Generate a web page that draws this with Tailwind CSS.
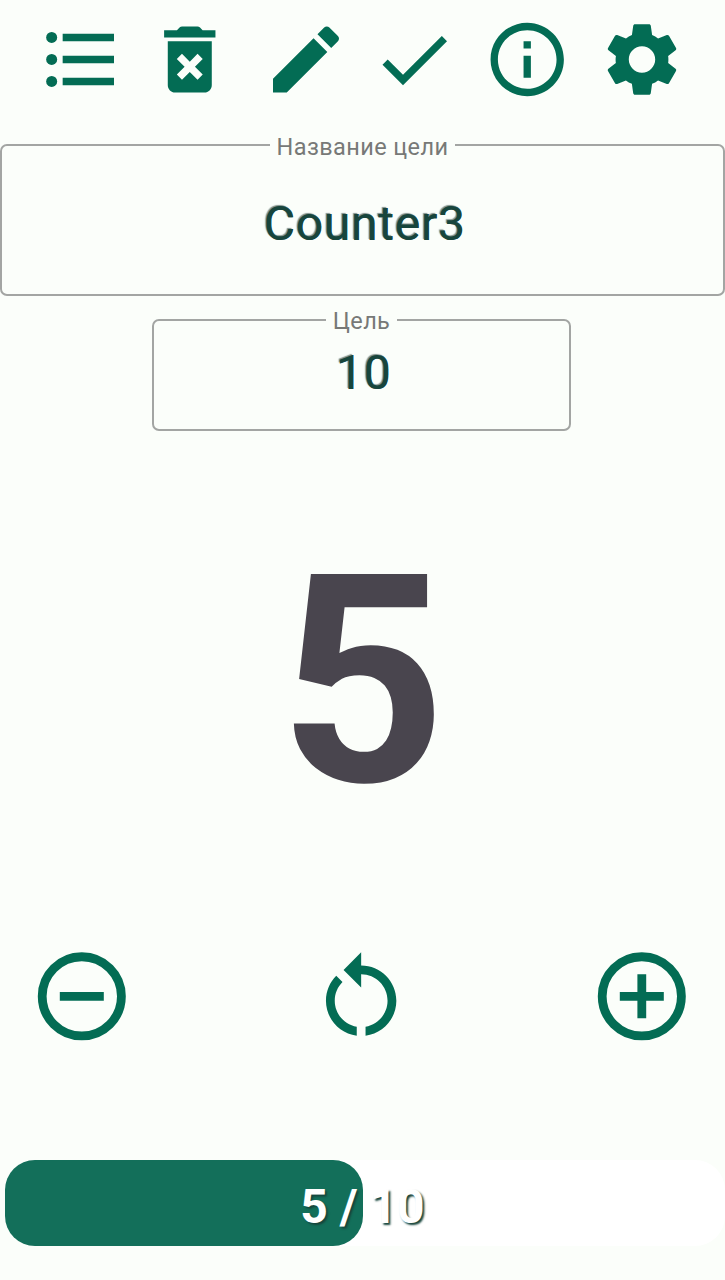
<!DOCTYPE html>
<html lang="ru">
<head>
<meta charset="utf-8">
<meta name="viewport" content="width=device-width, initial-scale=1">
<title>Counter3</title>
<script src="https://cdn.jsdelivr.net/npm/@tailwindcss/browser@4"></script>
</head>
<body class="bg-[#fbfefa] font-[Roboto,sans-serif]">
<div class="flex h-[1280px] w-[725px] flex-col overflow-hidden bg-[#fbfefa] text-[#036c54]">
  <header class="flex h-[144px] pt-[15px] pl-[37px]">
    <svg class="size-[88px] shrink-0" viewBox="0 -0.13 24 24" fill="currentColor"><circle cx="4" cy="6" r="1.5"/><circle cx="4" cy="12" r="1.5"/><circle cx="4" cy="18" r="1.5"/><path d="M7 5h14v2H7zM7 11h14v2H7zM7 17h14v2H7z"/></svg>
    <svg class="ml-[21px] size-[88px] shrink-0" viewBox="0.06 -0.13 24 24" fill="currentColor"><path fill-rule="evenodd" d="M6 19c0 1.100.9 2 2 2h8c1.100 0 2-.9 2-2V7H6v12zM8.460 11.880l1.410-1.410L12 12.590l2.120-2.120 1.410 1.410L13.410 14l2.120 2.120-1.410 1.410L12 15.410l-2.120 2.120-1.410-1.410L10.590 14zM15.500 4l-.71-.71c-.18-.18-.44-.29-.7-.29H9.910c-.26 0-.52.11-.7.29L8.500 4H5v2h14V4z"/></svg>
    <svg class="ml-[28px] size-[88px] shrink-0" viewBox="0 -0.13 24 24" fill="currentColor"><path d="M3 17.250V21h3.750L17.810 9.940l-3.750-3.750L3 17.250zM20.710 7.040c.39-.39.39-1.020 0-1.410l-2.340-2.340c-.39-.39-1.020-.39-1.410 0l-1.830 1.830 3.750 3.750 1.830-1.830z"/></svg>
    <svg class="ml-[20px] size-[88px] shrink-0" viewBox="0 -0.13 24 24" fill="currentColor"><path d="M9 16.170L4.830 12l-1.420 1.410L9 19 21 7l-1.410-1.410z"/></svg>
    <svg class="ml-[25.3px] size-[88px] shrink-0" viewBox="-0.06 -0.13 24 24" fill="currentColor"><path d="M11 7h2v2h-2zm0 4h2v6h-2zm1-9C6.480 2 2 6.480 2 12s4.480 10 10 10 10-4.480 10-10S17.520 2 12 2zm0 18c-4.410 0-8-3.590-8-8s3.590-8 8-8 8 3.590 8 8-3.590 8-8 8z"/></svg>
    <svg class="ml-[26.7px] size-[88px] shrink-0" viewBox="0 -0.13 24 24" fill="currentColor"><path d="M19.140 12.940c.04-.3.06-.61.06-.94 0-.32-.02-.64-.07-.94l2.030-1.580c.18-.14.23-.41.12-.61l-1.920-3.320c-.12-.22-.37-.29-.59-.22l-2.390.96c-.5-.38-1.030-.7-1.620-.94l-.36-2.540c-.04-.24-.24-.41-.48-.41h-3.840c-.24 0-.43.17-.47.41l-.36 2.540c-.59.24-1.130.57-1.620.94l-2.390-.96c-.22-.08-.47 0-.59.22L2.740 8.870c-.12.21-.08.47.12.61l2.030 1.580c-.05.3-.09.63-.09.94s.02.64.07.94l-2.030 1.580c-.18.14-.23.41-.12.61l1.920 3.320c.12.22.37.29.59.22l2.390-.96c.5.38 1.030.7 1.620.94l.36 2.540c.05.24.24.41.48.41h3.840c.24 0 .44-.17.47-.41l.36-2.540c.59-.24 1.130-.56 1.620-.94l2.390.96c.22.08.47 0 .59-.22l1.920-3.320c.12-.22.07-.47-.12-.61l-2.010-1.580zM12 15.600c-1.980 0-3.600-1.620-3.600-3.600s1.620-3.600 3.600-3.600 3.600 1.620 3.600 3.600-1.620 3.600-3.600 3.600z"/></svg>
  </header>

  <section class="flex h-[152px] flex-col items-center rounded-[7px] border-2 border-[#a3a5a3]">
    <div class="-mt-[13px] h-[28px] bg-[#fbfefa] px-[7px] text-[23.5px] leading-[28px] tracking-[0.4px] text-[#777977]">Название цели</div>
    <div class="mt-[33px] ml-[4px] text-[48px] leading-[60px] tracking-[0.75px] text-[#17453c] [text-shadow:-1px_-1px_1px_#7f8f8b,0.5px_0_0_#17453c]">Counter3</div>
  </section>

  <section class="mt-[23px] ml-[152px] flex h-[112px] w-[419px] flex-col items-center rounded-[7px] border-2 border-[#a3a5a3]">
    <div class="-mt-[14px] h-[28px] bg-[#fbfefa] px-[7px] text-[23.5px] leading-[28px] tracking-[0.4px] text-[#777977]">Цель</div>
    <div class="mt-[8px] ml-[4px] text-[48px] leading-[60px] tracking-[0.75px] text-[#17453c] [text-shadow:-1px_-1px_1px_#7f8f8b,0.5px_0_0_#17453c]">10</div>
  </section>

  <main class="flex h-[513px] justify-center pt-[81px] text-[291px] leading-[340px] font-bold text-[#49454e]">5</main>

  <nav class="flex h-[106px] pl-[29px]">
    <svg class="size-[106px] shrink-0" viewBox="0 0.1 24.09 24.09" fill="none" stroke="currentColor" stroke-width="2"><circle cx="12" cy="12" r="9"/><path d="M7 12h10"/></svg>
    <svg class="ml-[173px] size-[106px] shrink-0" viewBox="-0.08 0.1 24.09 24.09" fill="currentColor"><path d="M12 5V2L8 6l4 4V7c3.310 0 6 2.690 6 6 0 2.970-2.170 5.430-5 5.910v2.020c3.950-.49 7-3.850 7-7.930 0-4.420-3.580-8-8-8zM6 13c0-1.650.67-3.150 1.760-4.240L6.340 7.340C4.900 8.790 4 10.790 4 13c0 4.080 3.050 7.440 7 7.930v-2.020c-2.830-.48-5-2.940-5-5.910z"/></svg>
    <svg class="ml-[175px] size-[106px] shrink-0" viewBox="0 0.1 24.09 24.09" fill="none" stroke="currentColor" stroke-width="2"><circle cx="12" cy="12" r="9"/><path d="M7 12h10M12 7v10"/></svg>
  </nav>

  <footer class="relative mt-[110px] ml-[5px] h-[86px] rounded-[30px] bg-white">
    <div class="h-full w-[357.500px] rounded-[30px] bg-[#136f5a]"></div>
    <div class="absolute inset-0 flex items-center justify-center pt-[7px] pr-[5px] text-[48px] font-bold whitespace-pre text-white [text-shadow:2px_2px_2px_#17453c]">5 / 10</div>
  </footer>
</div>
</body>
</html>
